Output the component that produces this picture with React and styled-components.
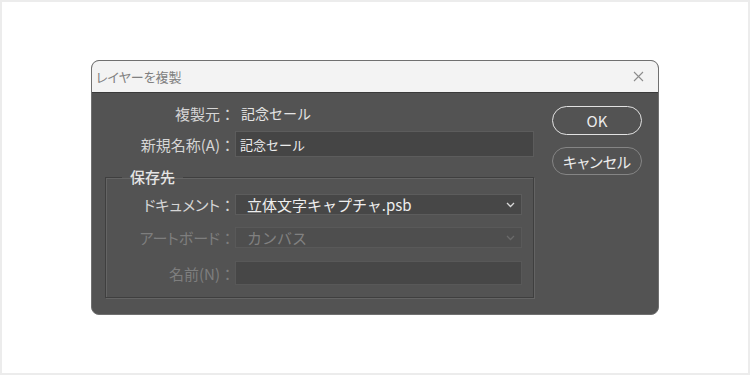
import React from "react";
import styled, { createGlobalStyle } from "styled-components";

const GlobalStyle = createGlobalStyle`
  html, body {
    margin: 0;
    padding: 0;
    background: #ffffff;
  }
  * {
    box-sizing: border-box;
  }
`;

const font = `"Noto Sans CJK JP", "Noto Sans", sans-serif`;

const Chevron = ({ dim }) => (
  <svg width="9" height="6" viewBox="0 0 9 6">
    <polyline
      points="1,1 4.5,4.5 8,1"
      fill="none"
      stroke={dim ? "#6a6a6a" : "#d8d8d8"}
      strokeWidth="1.3"
    />
  </svg>
);

const CloseIcon = () => (
  <svg width="11" height="11" viewBox="0 0 11 11">
    <path d="M1 1 L10 10 M10 1 L1 10" stroke="#8c8c8c" strokeWidth="1.1" />
  </svg>
);

// label text followed by a full-width colon that keeps its width
const FieldLabel = ({ children, disabled, width }) => (
  <Label disabled={disabled} width={width}>
    <LabelText>{children}</LabelText>
    <Colon>：</Colon>
  </Label>
);

const App = () => {
  return (
    <>
      <GlobalStyle />
      <Page>
        <Dialog>
          <TitleBar>
            <Title>レイヤーを複製</Title>
            <CloseButton>
              <CloseIcon />
            </CloseButton>
          </TitleBar>
          <Body>
            <Fields>
              <Row height={20}>
                <FieldLabel width={130}>複製元</FieldLabel>
                <Value>記念セール</Value>
              </Row>
              <Row height={26} gap={8}>
                <FieldLabel width={130}>新規名称(A)</FieldLabel>
                <TextInput>記念セール</TextInput>
              </Row>
              <Group>
                <Legend>保存先</Legend>
                <Row height={21}>
                  <FieldLabel width={129}>ドキュメント</FieldLabel>
                  <Select>
                    <span>立体文字キャプチャ.psb</span>
                    <Chevron />
                  </Select>
                </Row>
                <Row height={21} gap={12}>
                  <FieldLabel width={129} disabled>
                    アートボード
                  </FieldLabel>
                  <Select disabled>
                    <span>カンバス</span>
                    <Chevron dim />
                  </Select>
                </Row>
                <Row height={24} gap={13}>
                  <FieldLabel width={129} disabled>
                    名前(N)
                  </FieldLabel>
                  <NameInput />
                </Row>
              </Group>
            </Fields>
            <Buttons>
              <Button primary>OK</Button>
              <Button>キャンセル</Button>
            </Buttons>
          </Body>
        </Dialog>
      </Page>
    </>
  );
};

export default App;

const Page = styled.div`
  width: 750px;
  height: 375px;
  border: 2px solid #ececec;
  background: #ffffff;
  display: flex;
  align-items: center;
  justify-content: center;
  font-family: ${font};
`;

const Dialog = styled.div`
  width: 568px;
  height: 255px;
  border-radius: 8px;
  border: 1px solid #707070;
  overflow: hidden;
  background: #535353;
  display: flex;
  flex-direction: column;
`;

const TitleBar = styled.div`
  height: 32px;
  flex-shrink: 0;
  background: #f3f3f3;
  border-bottom: 1px solid #3a3a3a;
  display: flex;
  align-items: center;
  justify-content: space-between;
  padding: 0 14px 0 4px;
`;

const Title = styled.div`
  font-size: 13px;
  color: #808080;
  font-feature-settings: "palt";
`;

const CloseButton = styled.div`
  display: flex;
  align-items: center;
`;

const Body = styled.div`
  flex: 1;
  display: flex;
  justify-content: space-between;
  padding: 10px 16px 0 13px;
`;

const Fields = styled.div`
  width: 429px;
  display: flex;
  flex-direction: column;
`;

const Row = styled.div`
  display: flex;
  align-items: center;
  height: ${(p) => p.height}px;
  margin-top: ${(p) => p.gap || 0}px;
`;

const Label = styled.div`
  width: ${(p) => p.width}px;
  padding-right: 2px;
  display: flex;
  justify-content: flex-end;
  align-items: center;
  font-size: 15px;
  color: ${(p) => (p.disabled ? "#7e7e7e" : "#d6d6d6")};
  white-space: nowrap;
`;

const LabelText = styled.span`
  font-feature-settings: "palt";
`;

const Colon = styled.span`
  width: 13px;
  text-align: center;
`;

const Value = styled.div`
  font-size: 14px;
  color: #e4e4e4;
  padding-left: 6px;
`;

const TextInput = styled.div`
  width: 299px;
  height: 100%;
  background: #454545;
  border: 1px solid #5c5c5c;
  font-size: 13px;
  color: #ececec;
  display: flex;
  align-items: center;
  padding-left: 4px;
`;

const Group = styled.fieldset`
  margin: 10px 0 0 0;
  padding: 7px 11px 12px 0;
  width: 429px;
  border: 1px solid #3f3f3f;
  box-shadow: inset 1px 1px 0 #646464, 1px 1px 0 #646464;
  display: flex;
  flex-direction: column;
`;

const Legend = styled.legend`
  margin-left: 16px;
  padding: 0 8px;
  font-size: 15px;
  line-height: 20px;
  color: #e4e4e4;
  font-weight: 500;
`;

const Select = styled.div`
  width: 287px;
  height: 100%;
  background: ${(p) => (p.disabled ? "#4e4e4e" : "#474747")};
  border: 1px solid ${(p) => (p.disabled ? "#595959" : "#5c5c5c")};
  display: flex;
  align-items: center;
  justify-content: space-between;
  padding: 0 6px 0 11px;
  font-size: 15px;
  color: ${(p) => (p.disabled ? "#818181" : "#eeeeee")};
`;

const NameInput = styled.div`
  width: 287px;
  height: 100%;
  background: #474747;
  border: 1px solid #585858;
`;

const Buttons = styled.div`
  display: flex;
  flex-direction: column;
  gap: 12px;
  padding-top: 3px;
`;

const Button = styled.div`
  width: 90px;
  height: ${(p) => (p.primary ? 29 : 28)}px;
  border-radius: 15px;
  border: ${(p) => (p.primary ? "1.5px solid #e2e2e2" : "1.5px solid #858585")};
  display: flex;
  align-items: center;
  justify-content: center;
  font-size: 15px;
  color: #ececec;
  font-feature-settings: "palt";
`;
